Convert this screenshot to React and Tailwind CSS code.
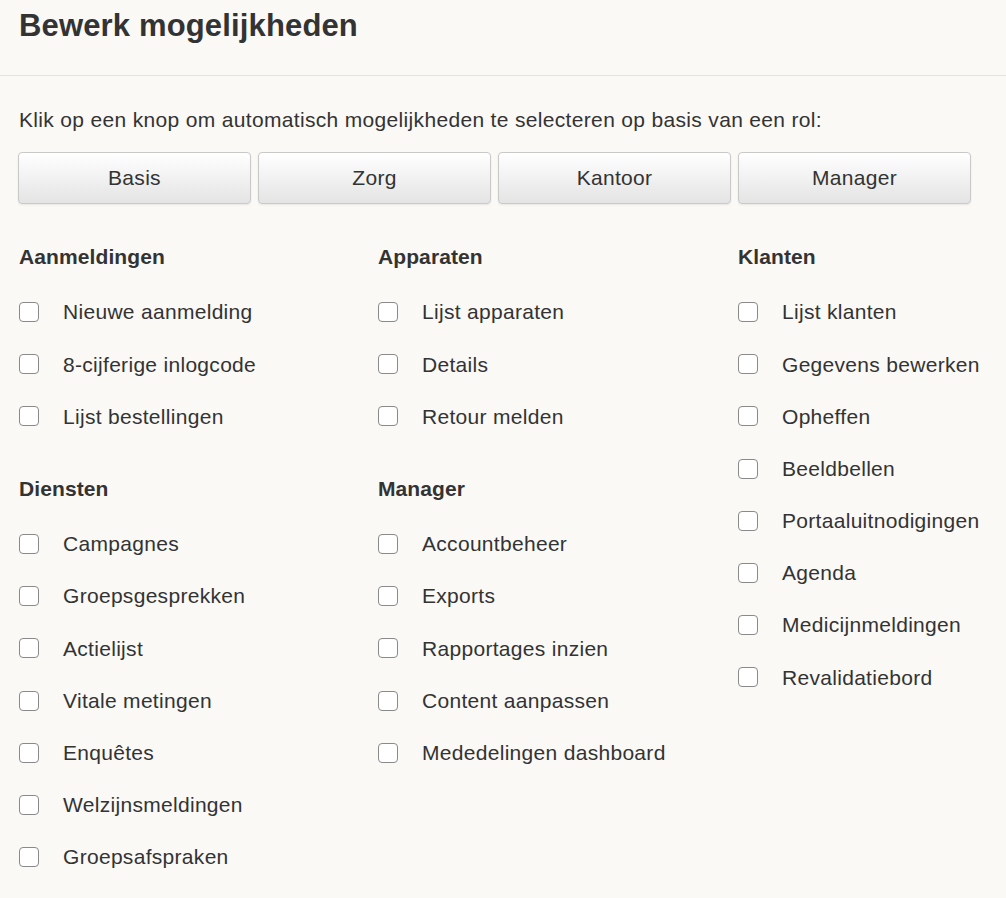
import React from 'react'

const roles = ['Basis', 'Zorg', 'Kantoor', 'Manager']

const columns = [
    [
        { title: 'Aanmeldingen', items: ['Nieuwe aanmelding', '8-cijferige inlogcode', 'Lijst bestellingen'] },
        {
            title: 'Diensten',
            items: ['Campagnes', 'Groepsgesprekken', 'Actielijst', 'Vitale metingen', 'Enquêtes', 'Welzijnsmeldingen', 'Groepsafspraken'],
        },
    ],
    [
        { title: 'Apparaten', items: ['Lijst apparaten', 'Details', 'Retour melden'] },
        {
            title: 'Manager',
            items: ['Accountbeheer', 'Exports', 'Rapportages inzien', 'Content aanpassen', 'Mededelingen dashboard'],
        },
    ],
    [
        {
            title: 'Klanten',
            items: [
                'Lijst klanten',
                'Gegevens bewerken',
                'Opheffen',
                'Beeldbellen',
                'Portaaluitnodigingen',
                'Agenda',
                'Medicijnmeldingen',
                'Revalidatiebord',
            ],
        },
    ],
]

const CheckRow = ({ label }) => (
    <label className="flex h-[52.2px] items-center cursor-pointer">
        <span className="w-[20px] h-[20px] rounded-[4px] border-[1.5px] border-[#8a8a8a] bg-white shrink-0" />
        <span className="ml-[24px] text-[21px] tracking-[0.3px] whitespace-nowrap text-[#333]">{label}</span>
    </label>
)

const Section = ({ title, items }) => (
    <div className="mb-[31.4px]">
        <h3 className="h-[30px] flex items-center text-[21px] tracking-[0.1px] font-bold text-[#333]">{title}</h3>
        <div className="mt-[14px]">
            {items.map((item) => (
                <CheckRow key={item} label={item} />
            ))}
        </div>
    </div>
)

export default function App() {
    return (
        <div className="min-h-[898px] bg-[#faf9f6] font-['Liberation_Sans',Arial,sans-serif] text-[#333]">
            {/* Header */}
            <div className="h-[76px] border-b border-[#e4e3e0] pl-[19px] pt-[6px]">
                <h1 className="text-[31px] font-bold leading-[40px] tracking-[0.15px] text-[#333]">Bewerk mogelijkheden</h1>
            </div>

            <div className="pl-[19px]">
                <p className="mt-[31px] text-[21px] leading-[26px] tracking-[0.33px] whitespace-nowrap">
                    Klik op een knop om automatisch mogelijkheden te selecteren op basis van een rol:
                </p>

                <div className="flex gap-[7px] mt-[19px] -ml-px">
                    {roles.map((role) => (
                        <button
                            key={role}
                            className="w-[233px] h-[52px] rounded-[4px] border border-[#c9c9c9] bg-gradient-to-b from-white to-[#e4e4e4] shadow-[0_1px_2px_rgba(0,0,0,0.08)] text-[21px] tracking-[0.3px] text-[#333]"
                        >
                            {role}
                        </button>
                    ))}
                </div>

                <div className="grid grid-cols-[359px_360px_1fr] mt-[38px]">
                    {columns.map((col, i) => (
                        <div key={i}>
                            {col.map((section) => (
                                <Section key={section.title} {...section} />
                            ))}
                        </div>
                    ))}
                </div>
            </div>
        </div>
    )
}
